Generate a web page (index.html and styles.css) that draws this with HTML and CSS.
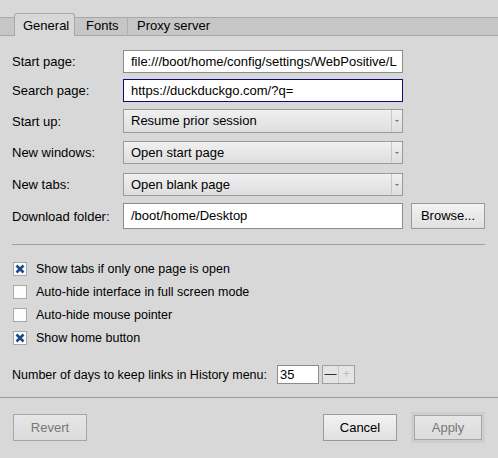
FILE: index.html
```html
<!DOCTYPE html>
<html>
<head>
<meta charset="utf-8">
<link rel="stylesheet" href="styles.css">
</head>
<body>
<div class="window">
  <div class="tabstrip">
    <div class="tab active">General</div>
    <div class="tab">Fonts</div>
    <div class="tab">Proxy server</div>
  </div>
  <div class="panel">
    <div class="row r1">
      <div class="label">Start page:</div>
      <div class="field text">file:///boot/home/config/settings/WebPositive/L</div>
    </div>
    <div class="row r2">
      <div class="label">Search page:</div>
      <div class="field text focus">https://duckduckgo.com/?q=</div>
    </div>
    <div class="row r3">
      <div class="label">Start up:</div>
      <div class="field menu"><span class="mtext">Resume prior session</span><span class="arrow"></span></div>
    </div>
    <div class="row r4">
      <div class="label">New windows:</div>
      <div class="field menu"><span class="mtext">Open start page</span><span class="arrow"></span></div>
    </div>
    <div class="row r5">
      <div class="label">New tabs:</div>
      <div class="field menu"><span class="mtext">Open blank page</span><span class="arrow"></span></div>
    </div>
    <div class="row r6">
      <div class="label">Download folder:</div>
      <div class="field text tall">/boot/home/Desktop</div>
      <div class="button browse">Browse...</div>
    </div>
    <div class="sep"></div>
    <div class="checks">
      <div class="check"><span class="box on"><svg viewBox="0 0 14 14" width="14" height="14"><path d="M3.5 3.5 L10.5 10.5 M10.5 3.5 L3.5 10.5" stroke="#1f4a8a" stroke-width="2.6" stroke-linecap="butt"/></svg></span>Show tabs if only one page is open</div>
      <div class="check"><span class="box"></span>Auto-hide interface in full screen mode</div>
      <div class="check"><span class="box"></span>Auto-hide mouse pointer</div>
      <div class="check"><span class="box on"><svg viewBox="0 0 14 14" width="14" height="14"><path d="M3.5 3.5 L10.5 10.5 M10.5 3.5 L3.5 10.5" stroke="#1f4a8a" stroke-width="2.6" stroke-linecap="butt"/></svg></span>Show home button</div>
    </div>
    <div class="days">
      <span class="label">Number of days to keep links in History menu:</span>
      <span class="num">35</span>
      <span class="spin"><span class="minus">—</span><span class="plus">+</span></span>
    </div>
  </div>
  <div class="buttons">
    <div class="button disabled revert">Revert</div>
    <div class="spacer"></div>
    <div class="button cancel">Cancel</div>
    <div class="default"><div class="button disabled apply">Apply</div></div>
  </div>
</div>
</body>
</html>
```
FILE: styles.css
```css
html, body {
  margin: 0;
  padding: 0;
  background: #d8d8d8;
  font-family: "Liberation Sans", Arial, sans-serif;
  font-size: 13px;
  color: #000;
}
.window {
  width: 498px;
  height: 458px;
  overflow: hidden;
}
.tabstrip {
  margin-top: 13px;
  height: 23px;
  display: flex;
  align-items: flex-end;
  padding-left: 14px;
  background: linear-gradient(to bottom, transparent 0, transparent 4px, #a8a8a8 4px, #a8a8a8 5px, #c6c6c6 5px, #c6c6c6 22px, #a8a8a8 22px, #a8a8a8 23px);
}
.tab {
  height: 18px;
  line-height: 18px;
  padding: 0 9px 0 10px;
  border-right: 1px solid #b0b0b0;
  box-sizing: border-box;
  margin-bottom: 1px;
}
.tab.active {
  height: 23px;
  line-height: 23px;
  margin-bottom: 0;
  width: 61px;
  padding: 0 0 0 8px;
  background: #d8d8d8;
  border: 1px solid #a8a8a8;
  border-bottom: none;
  border-radius: 3px 3px 0 0;
}
.tab:nth-child(2) { width: 53px; padding-left: 11px; }
.tab:nth-child(3) { padding-left: 9px; border-right: none; }

.panel {
  height: 362px;
  border-bottom: 1px solid #9a9a9a;
  box-sizing: border-box;
  padding: 14px 12px 0 12px;
}
.row {
  display: flex;
  align-items: center;
}
.label {
  width: 111px;
  flex: none;
}
.field {
  width: 280px;
  height: 23px;
  box-sizing: border-box;
  flex: none;
}
.text {
  background: #fff;
  border: 1px solid #8c8c8c;
  padding: 0 7px;
  line-height: 21px;
  white-space: nowrap;
  overflow: hidden;
}
.text.focus { border-color: #0a0a78; }
.text.tall { height: 26px; line-height: 24px; }
.menu {
  border: 1px solid #9a9a9a;
  background: linear-gradient(to bottom, #f0f0f0, #dedede);
  display: flex;
  align-items: stretch;
}
.mtext {
  flex: 1;
  padding-left: 7px;
  line-height: 21px;
}
.arrow {
  width: 10px;
  border-left: 1px solid #c8c8c8;
  position: relative;
}
.arrow::after {
  content: "";
  position: absolute;
  left: 3px;
  top: 10px;
  border-left: 2px solid transparent;
  border-right: 2px solid transparent;
  border-top: 2px solid #777;
}
.r2 { margin-top: 6px; }
.r3 { margin-top: 7px; }
.r3 .field { height: 24px; }
.r4 { margin-top: 8px; }
.r5 { margin-top: 9px; }
.r6 { margin-top: 7px; }
.button {
  box-sizing: border-box;
  border: 1px solid #999;
  background: linear-gradient(to bottom, #f2f2f2, #e0e0e0);
  text-align: center;
}
.browse {
  margin-left: 8px;
  width: 74px;
  height: 26px;
  line-height: 24px;
}
.sep {
  margin-top: 15px;
  height: 1px;
  background: #a0a0a0;
  margin-right: 1px;
}
.checks {
  margin-top: 17px;
  display: flex;
  flex-direction: column;
  gap: 9px;
  font-size: 12.5px;
}
.check {
  display: flex;
  align-items: center;
  height: 14px;
  padding-left: 1px;
}
.box {
  width: 14px;
  height: 14px;
  box-sizing: border-box;
  border: 1px solid #a8a8a8;
  background: #fcfcfc;
  margin-right: 9px;
  display: inline-block;
  position: relative;
}
.box svg { position: absolute; left: -1px; top: -1px; }
.days {
  margin-top: 20px;
  display: flex;
  align-items: center;
  height: 19px;
}
.days .label { width: auto; margin-right: 10px; font-size: 12.5px; }
.num {
  width: 42px;
  height: 19px;
  box-sizing: border-box;
  background: #fff;
  border: 1px solid #8c8c8c;
  line-height: 17px;
  padding-left: 2px;
}
.spin {
  margin-left: 3px;
  width: 33px;
  height: 19px;
  box-sizing: border-box;
  border: 1px solid #a0a0a0;
  background: #e4e4e4;
  display: flex;
}
.minus, .plus {
  flex: 1;
  text-align: center;
  line-height: 17px;
  font-size: 12px;
}
.minus { color: #333; border-right: 1px solid #c8c8c8; }
.plus { color: #bbb; }
.buttons {
  display: flex;
  align-items: center;
  padding: 14px 13px 0 13px;
}
.spacer { flex: 1; }
.revert, .cancel {
  width: 74px;
  height: 27px;
  line-height: 25px;
}
.disabled { color: #777; background: linear-gradient(to bottom, #e6e6e6, #dcdcdc); border-color: #a6a6a6; }
.default {
  margin-left: 14px;
  padding: 2px;
  background: #cdcdcd;
  border: 1px solid #d0d0d0;
}
.apply {
  width: 68px;
  height: 25px;
  line-height: 23px;
}
```
